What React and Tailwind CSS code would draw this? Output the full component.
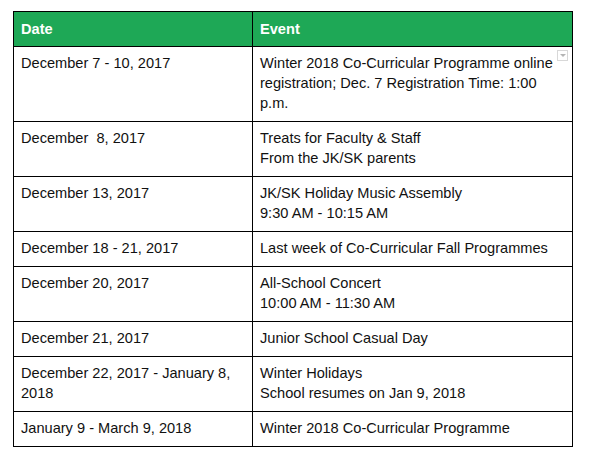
const rows = [
  { date: "December 7 - 10, 2017", event: ["Winter 2018 Co-Curricular Programme online", "registration; Dec. 7 Registration Time: 1:00", "p.m."], menu: true },
  { date: "December  8, 2017", event: ["Treats for Faculty & Staff", "From the JK/SK parents"] },
  { date: "December 13, 2017", event: ["JK/SK Holiday Music Assembly", "9:30 AM - 10:15 AM"] },
  { date: "December 18 - 21, 2017", event: ["Last week of Co-Curricular Fall Programmes"] },
  { date: "December 20, 2017", event: ["All-School Concert", "10:00 AM - 11:30 AM"] },
  { date: "December 21, 2017", event: ["Junior School Casual Day"] },
  { date: "December 22, 2017 - January 8, 2018", event: ["Winter Holidays", "School resumes on Jan 9, 2018"] },
  { date: "January 9 - March 9, 2018", event: ["Winter 2018 Co-Curricular Programme"] },
];

function EventCell({ event, menu }) {
  return (
    <div className="relative w-[319px] px-[7px] pt-[6px] pb-[8px]">
      {event.map((line) => (
        <div key={line} className="whitespace-nowrap">{line}</div>
      ))}
      {menu && (
        <div className="absolute right-[4px] top-[3px] w-[11px] h-[11px] border border-[#d8d8d8] bg-white flex items-center justify-center">
          <div className="w-0 h-0 border-l-[3px] border-r-[3px] border-t-[3px] border-l-transparent border-r-transparent border-t-[#b5b5b5]"></div>
        </div>
      )}
    </div>
  );
}

export default function App() {
  return (
    <div className="w-[592px] h-[470px] bg-white pt-[11px] pl-[13px] text-[14.6px] leading-[20px] text-[#111]" style={{ fontFamily: '"Liberation Sans", Arial, sans-serif' }}>
      <div className="w-[560px] border border-black">
        <div className="flex bg-[#1ea856] text-white font-bold">
          <div className="w-[239px] border-r border-black px-[7px] py-[7px]">Date</div>
          <div className="w-[319px] px-[7px] py-[7px]">Event</div>
        </div>
        {rows.map((row) => (
          <div key={row.date} className="flex border-t border-black">
            <div className="w-[239px] border-r border-black px-[7px] pt-[6px] pb-[8px] whitespace-pre-wrap">{row.date}</div>
            <EventCell event={row.event} menu={row.menu} />
          </div>
        ))}
      </div>
    </div>
  );
}
